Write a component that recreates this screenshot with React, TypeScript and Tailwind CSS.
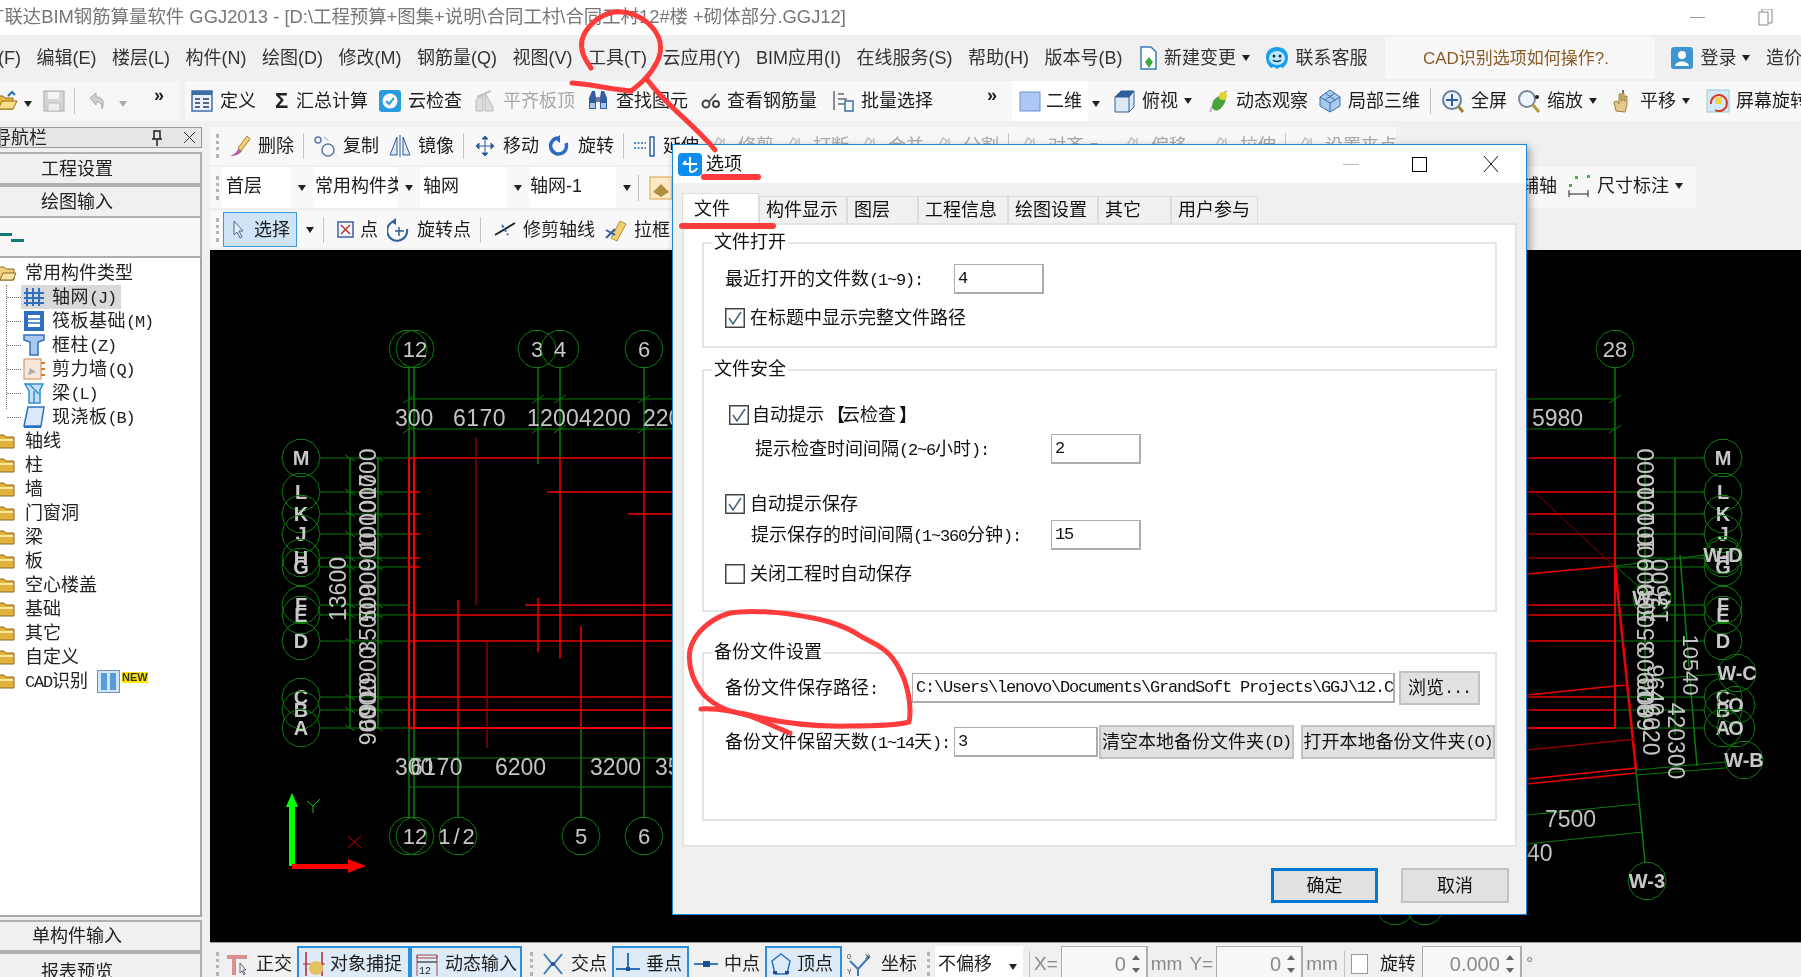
import React from "react";

const Caret = ({ c = "border-t-[#222]" }: { c?: string }) => (
  <span className={`inline-block w-0 h-0 border-x-[4px] border-x-transparent border-t-[6px] shrink-0 ${c}`} />
);
const Grip = () => <div className="w-0 h-[24px] border-l-[3px] border-dotted border-[#b4b4b4] shrink-0" />;
const Sep = () => <div className="w-px h-[26px] bg-[#c4c4c4] shrink-0" />;
const L = ({ children }: { children: React.ReactNode }) => (
  <span className="[font-family:'Liberation_Mono',monospace] text-[17px] tracking-[-1.2px]">{children}</span>
);

const S = ({ children, w = 24 }: { children: React.ReactNode; w?: number }) => (
  <svg width={w} height="24" viewBox={`0 0 ${w} 24`} fill="none" className="shrink-0">{children}</svg>
);

const I = {
  open: <S><path d="M1 7h8l2 2h8v11H1z" fill="#e8b84a" stroke="#9a6a10" /><path d="M4 20l4-8h15l-4 8z" fill="#f9dc86" stroke="#9a6a10" /><path d="M14 7l4-4 3 3" stroke="#2b6cb0" strokeWidth="2" /></S>,
  save: <S><rect x="2" y="2" width="20" height="20" fill="#d6d6d6" stroke="#aaa" /><rect x="6" y="3" width="11" height="7" fill="#f4f4f4" /><rect x="6" y="14" width="12" height="8" fill="#eee" stroke="#bbb" /></S>,
  undo: <S><path d="M5 9l6-5v4c6 0 9 4 6 12 0-6-2-7-6-7v3z" fill="#d0d0d0" stroke="#aaa" /></S>,
  def: <S><rect x="2" y="2" width="20" height="20" fill="#e9f1fb" stroke="#3d6ea8" strokeWidth="1.5" /><rect x="2" y="2" width="20" height="4" fill="#3d6ea8" /><path d="M5 10h5M5 14h5M5 18h5M13 10h6M13 14h6M13 18h6" stroke="#335" strokeWidth="1.5" /></S>,
  cloud: <S><rect x="1" y="1" width="22" height="22" rx="3" fill="#2b9be0" /><circle cx="12" cy="12" r="7.5" fill="#fff" /><path d="M8 12l3 3 5-6" stroke="#2b9be0" strokeWidth="2" /></S>,
  flat: <S><path d="M3 22V11l7-5v16zM12 22V4l8 14v4z" fill="#ddd" stroke="#b8b8b8" /><path d="M4 8L18 2" stroke="#c4c4c4" strokeWidth="2" /></S>,
  find: <S><path d="M3 9l3-7h3l1 7v11H3zM21 9l-3-7h-3l-1 7v11h7z" fill="#2f5f9e" /><rect x="10" y="8" width="4" height="5" fill="#77a" /><rect x="4" y="14" width="5" height="5" fill="#a8c6e8" /><rect x="15" y="14" width="5" height="5" fill="#a8c6e8" /></S>,
  glass: <S w={20}><circle cx="5" cy="15" r="3.5" stroke="#444" strokeWidth="2" /><circle cx="15" cy="15" r="3" stroke="#444" strokeWidth="2" /><path d="M8 13l7-8" stroke="#444" strokeWidth="1.5" /></S>,
  batch: <S><path d="M3 2v19M7 5h6M7 10h9M7 15h6" stroke="#667" strokeWidth="1.5" /><path d="M14 12h8v10h-8z" stroke="#3d6ea8" strokeWidth="1.5" /></S>,
  two: <S><rect x="2" y="3" width="20" height="19" fill="#aec8f4" stroke="#6a90d0" /></S>,
  top: <S><path d="M3 8l6-6h13v16l-5 5H3z" fill="#dbe8f5" stroke="#335e8e" /><path d="M3 8h14v15M17 8l5-6" stroke="#335e8e" /><path d="M9 2h13l-5 6H3z" fill="#2f5f9e" /></S>,
  orbit: <S><path d="M4 23C7 14 12 6 21 2" stroke="#b8b8b8" strokeWidth="2" /><path d="M7 12c3-4 8-6 11-4s1 7-3 11-8 3-9-1z" fill="#49a33c" /><circle cx="17" cy="7" r="4" fill="#e5d430" /></S>,
  local: <S><path d="M12 1l10 7v9l-10 6-10-6V8z" fill="#a9c8ec" stroke="#3d6ea8" /><path d="M2 8l10 6 10-6M12 14v9M7 4l10 7M17 4L7 11" stroke="#3d6ea8" /></S>,
  full: <S><circle cx="11" cy="11" r="9" fill="#e8f0fa" stroke="#667a99" strokeWidth="2" /><path d="M11 5v12M5 11h12" stroke="#2f5f9e" strokeWidth="2" /><path d="M17 17l5 6" stroke="#a08030" strokeWidth="3" /></S>,
  zoom: <S><circle cx="10" cy="10" r="8" fill="#eef4fb" stroke="#7788a0" strokeWidth="2" /><path d="M16 16l6 7" stroke="#b89a40" strokeWidth="3" /><circle cx="20" cy="8" r="2" fill="#222" /></S>,
  hand: <S><path d="M6 22l-2-9 3-1 2 3V5h2v7h1V4h2v8h1V7h2v9l-2 7z" fill="#e3c98a" stroke="#a08040" /><path d="M13 1v3" stroke="#668" strokeWidth="2" /></S>,
  screen: <S><rect x="1" y="1" width="22" height="22" fill="#d3eaf8" stroke="#9cc" /><path d="M5 15a8 8 0 1 1 4 6" stroke="#d83a2a" strokeWidth="2" /><rect x="9" y="8" width="7" height="7" fill="#f1d24a" /></S>,
  del: <S><path d="M2 22c3-1 6-3 9-8l3 3c-2 3-6 5-12 5z" fill="#c060a0" /><path d="M10 14l9-12 3 3-9 12z" fill="#f1d070" stroke="#aa8030" /></S>,
  copy: <S><circle cx="5" cy="6" r="3" stroke="#5a7aa8" strokeWidth="1.5" /><circle cx="15" cy="16" r="6" stroke="#5a7aa8" strokeWidth="1.5" /><path d="M11 3l5 4" stroke="#5a7aa8" strokeDasharray="2 1" /></S>,
  mirror: <S><path d="M2 21L9 3v18zM22 21L15 3v18z" fill="#dbe8f5" stroke="#2f5f9e" /><path d="M12 1v22" stroke="#2f5f9e" /></S>,
  move: <S><path d="M12 2v20M3 12h18M12 2l-3 3h6zM12 22l-3-3h6zM3 12l3-3v6zM21 12l-3-3v6z" stroke="#2f5f9e" fill="#2f5f9e" /></S>,
  rot: <S><path d="M10 4a8 8 0 1 0 8 5" stroke="#2a6ac0" strokeWidth="3.5" /><path d="M12 1v8l-5-4z" fill="#2a6ac0" /></S>,
  ext: <S><path d="M1 9h12M1 14h12" stroke="#2f5f9e" strokeDasharray="2 1.5" strokeWidth="1.5" /><rect x="17" y="3" width="4" height="19" stroke="#2f5f9e" strokeWidth="1.5" /></S>,
  grayT: <S><path d="M2 20L10 4l4 3-8 13zM16 4v16" stroke="#c4c4c4" strokeWidth="1.5" /></S>,
  layer: <S><rect x="1" y="1" width="22" height="22" fill="#fde9c8" stroke="#e0a040" /><path d="M4 16l8-8 8 8-8 5z" fill="#b09040" /></S>,
  arrow: <S w={16}><path d="M4 3v14l3-3 3 6 2-1-3-6h4z" fill="#e8eef6" stroke="#4a6a90" /></S>,
  point: <S w={18}><rect x="2" y="4" width="15" height="15" fill="#f4f8fd" stroke="#3d5fa0" strokeWidth="1.5" /><path d="M5 7l9 9M14 7l-9 9" stroke="#c03030" strokeWidth="1.5" /></S>,
  rotP: <S><path d="M8 3a10 10 0 1 0 12 8" stroke="#2f5f9e" strokeWidth="2" /><path d="M9 0v7l-5-3z" fill="#2f5f9e" /><path d="M12 9v9M8 13h9" stroke="#2f5f9e" strokeWidth="1.5" /></S>,
  trim: <S><path d="M2 17L22 5" stroke="#222" strokeWidth="2" /><path d="M9 7l6 10" stroke="#2a6ac0" strokeWidth="2" strokeDasharray="3 2" /></S>,
  box: <S><path d="M7 20l9-17 6 3-9 17z" fill="#f1d070" stroke="#b09040" /><path d="M2 12l9 5M2 20l9-9" stroke="#2f5f9e" strokeWidth="2" /></S>,
  doc: <S w={20}><path d="M3 1h10l5 5v17H3z" fill="#fff" stroke="#3d7ab8" strokeWidth="1.5" /><path d="M11 11l4 5-4 6-4-6z" fill="#3aa83a" /></S>,
  smile: <S><path d="M12 1c6 0 11 4 11 10s-3 9-5 11l-3-1-3 2-3-2-3 1C4 20 1 17 1 11S6 1 12 1z" fill="#19a0ea" /><ellipse cx="12" cy="12" rx="8" ry="7" fill="#bfe9ff" /><circle cx="9" cy="10" r="1.5" fill="#135" /><circle cx="15" cy="10" r="1.5" fill="#135" /><path d="M8 14c2 2 6 2 8 0" stroke="#135" strokeWidth="1.5" /></S>,
  user: <S><rect x="1" y="1" width="22" height="22" rx="3" fill="#3c96d2" /><circle cx="12" cy="9" r="4" fill="#fff" /><path d="M5 20c1-6 13-6 14 0z" fill="#fff" /></S>,
  size: <S><rect x="8" y="2" width="3" height="3" fill="#30c040" /><rect x="20" y="1" width="3" height="3" fill="#30c040" /><rect x="2" y="10" width="3" height="3" fill="#30c040" /><path d="M2 16v7M21 16v7M2 20h19" stroke="#222" /></S>,
  ortho: <S><path d="M2 5h20M9 5v18" stroke="#d89090" strokeWidth="4" /><path d="M15 11v10l2-2 2 4 1-1-2-4h3z" fill="#eee" stroke="#667" /></S>,
  snap: <S><path d="M4 0v24M20 0v24" stroke="#b02a2a" strokeWidth="1.5" /><path d="M1 12h22" stroke="#b02a2a" /><circle cx="14" cy="16" r="7" fill="#e3c060" /></S>,
  dyn: <S><path d="M2 3h20v3H2zM2 3v21M22 3v21" stroke="#a04a4a" /><path d="M2 10h20" stroke="#555" strokeWidth="1.5" /><text x="4" y="22" fontSize="10" fill="#222" fontFamily="Liberation Mono">12</text></S>,
  cross: <S><path d="M3 2l8 10L3 22M21 2l-8 10 8 10" stroke="#3d7ab8" strokeWidth="2" /><circle cx="12" cy="12" r="2" fill="#1f4e8c" /></S>,
  perp: <S><path d="M12 1v15" stroke="#2f6fc0" strokeWidth="2" /><path d="M0 17h24" stroke="#2f6fc0" strokeWidth="2" /><rect x="10" y="15" width="4" height="4" fill="#1f4e8c" /></S>,
  mid: <S><path d="M0 12h24" stroke="#3d7ab8" strokeWidth="2" /><rect x="9" y="9" width="7" height="6" fill="#1f4e8c" /></S>,
  vert: <S><path d="M12 2l9 7-3 13H6L3 9z" stroke="#2f6fc0" strokeWidth="1.5" /><rect x="4" y="19" width="4" height="3" fill="#1f4e8c" /><rect x="16" y="19" width="4" height="3" fill="#1f4e8c" /></S>,
  coord: <S w={28}><path d="M3 9l8 8 12-13M11 17v7" stroke="#3d7ab8" strokeWidth="2" /><text x="0" y="7" fontSize="7" fill="#333">0</text><text x="18" y="7" fontSize="7" fill="#333">X</text><text x="0" y="22" fontSize="7" fill="#333">Y</text></S>,
};

const Tool = ({ icon, label, gray, caret, className = "" }: { icon?: React.ReactNode; label: string; gray?: boolean; caret?: boolean; className?: string }) => (
  <div className={`flex items-center gap-[6px] shrink-0 ${gray ? "text-[#a8a8a8]" : ""} ${className}`}>
    {icon}
    <span className="whitespace-nowrap">{label}</span>
    {caret && <Caret c={gray ? "border-t-[#aaa]" : "border-t-[#222]"} />}
  </div>
);

const Field = ({ width, children, className = "" }: { width: string; children?: React.ReactNode; className?: string }) => (
  <div className={`${width} h-[30px] bg-white border border-[#adadad] border-b-2 border-r-2 flex items-center pl-[3px] overflow-hidden whitespace-nowrap shrink-0 ${className}`}>
    <L>{children}</L>
  </div>
);

const Check = ({ on }: { on?: boolean }) => (
  <svg width="20" height="20" viewBox="0 0 20 20" className="shrink-0">
    <rect x="0.75" y="0.75" width="18.5" height="18.5" fill="#fff" stroke="#444" strokeWidth="1.5" />
    {on && <path d="M4 10l4 6 8-12" fill="none" stroke="#3f5f80" strokeWidth="1.5" />}
  </svg>
);

const Group = ({ title, className, children }: { title: string; className: string; children: React.ReactNode }) => (
  <div className={`relative border-2 border-[#e4e4e4] ${className}`}>
    <span className="absolute left-[8px] top-[-14px] bg-white px-[2px] leading-[24px] whitespace-nowrap">{title}</span>
    {children}
  </div>
);

const Btn = ({ className, children }: { className: string; children: React.ReactNode }) => (
  <div className={`flex items-center justify-center bg-[#e1e1e1] border-2 border-[#c2c2c2] whitespace-nowrap shrink-0 ${className}`}>{children}</div>
);

const Tab = ({ label, className }: { label: string; className: string }) => (
  <div className={`h-[27px] bg-[#f0f0f0] border border-b-0 border-[#dcdcdc] pl-[6px] flex items-center whitespace-nowrap overflow-hidden ${className}`}>{label}</div>
);

const Dialog = () => (
  <div className="absolute left-[672px] top-[144px] w-[855px] h-[771px] border border-[#1c86d8] bg-[#f0f0f0] shadow-[3px_3px_8px_rgba(0,0,0,0.35)] text-[#111] text-[18px] flex flex-col">
    <div className="h-[38px] bg-white flex items-center pl-[5px]">
      <svg width="24" height="23" viewBox="0 0 24 23"><rect width="24" height="23" rx="4" fill="#0a8cf0" /><path d="M12 4v15M5 11h14M5 11l3-3M12 19c3 0 6-1 7-4" stroke="#fff" strokeWidth="2" fill="none" /></svg>
      <span className="ml-[4px]">选项</span>
      <div className="ml-auto w-[16px] h-px bg-[#b8b8b8] mr-[53px]" />
      <div className="w-[15px] h-[15px] border-[1.5px] border-black mr-[57px]" />
      <svg width="14" height="16" viewBox="0 0 14 16" className="mr-[28px]"><path d="M0 0l14 16M14 0L0 16" stroke="#111" /></svg>
    </div>
    <div className="h-[40px] flex items-end pl-[9px]">
      <div className="h-[30px] w-[77px] bg-white border border-b-0 border-[#dcdcdc] pl-[11px] flex items-center">文件</div>
      <Tab label="构件显示" className="w-[88px]" />
      <Tab label="图层" className="w-[71px]" />
      <Tab label="工程信息" className="w-[90px]" />
      <Tab label="绘图设置" className="w-[90px]" />
      <Tab label="其它" className="w-[73px]" />
      <Tab label="用户参与" className="w-[87px]" />
    </div>
    <div className="mx-[9px] h-[624px] bg-white border-2 border-[#e4e4e4] px-[18px]">
      <Group title="文件打开" className="mt-[17px] h-[106px] pl-[21px] pt-[20px]">
        <div className="flex items-center">
          <span className="w-[229px] whitespace-nowrap">最近打开的文件数<L>(1~9):</L></span>
          <Field width="w-[90px]">4</Field>
        </div>
        <div className="flex items-center gap-[5px] mt-[14px]"><Check on /><span>在标题中显示完整文件路径</span></div>
      </Group>
      <Group title="文件安全" className="mt-[21px] h-[243px] pl-[21px] pt-[34px]">
        <div className="flex items-center gap-[3px] ml-[4px]"><Check on /><span>自动提示</span><span className="font-bold">【</span><span className="-ml-[6px]">云检查</span><span className="font-bold">】</span></div>
        <div className="flex items-center mt-[9px]">
          <span className="w-[326px] pl-[30px] whitespace-nowrap">提示检查时间间隔<L>(2~6</L>小时<L>):</L></span>
          <Field width="w-[90px]">2</Field>
        </div>
        <div className="flex items-center gap-[5px] mt-[30px]"><Check on /><span>自动提示保存</span></div>
        <div className="flex items-center mt-[6px]">
          <span className="w-[326px] pl-[26px] whitespace-nowrap">提示保存的时间间隔<L>(1~360</L>分钟<L>):</L></span>
          <Field width="w-[90px]">15</Field>
        </div>
        <div className="flex items-center gap-[5px] mt-[14px]"><Check /><span>关闭工程时自动保存</span></div>
      </Group>
      <Group title="备份文件设置" className="mt-[40px] h-[169px] pl-[21px] pt-[17px]">
        <div className="flex items-center h-[34px]">
          <span className="w-[187px] whitespace-nowrap">备份文件保存路径<L>:</L></span>
          <Field width="w-[483px]">{"C:\\Users\\lenovo\\Documents\\GrandSoft Projects\\GGJ\\12.C"}</Field>
          <Btn className="ml-[4px] w-[81px] h-[34px]"><span>浏览</span><L>...</L></Btn>
        </div>
        <div className="flex items-center h-[34px] mt-[20px]">
          <span className="w-[229px] whitespace-nowrap">备份文件保留天数<L>(1~14</L>天<L>):</L></span>
          <Field width="w-[144px]" className="border-r-0">3</Field>
          <Btn className="ml-[1px] w-[195px] h-[34px]"><span>清空本地备份文件夹</span><L>(D)</L></Btn>
          <Btn className="ml-[7px] w-[194px] h-[34px]"><span>打开本地备份文件夹</span><L>(O)</L></Btn>
        </div>
      </Group>
    </div>
    <div className="flex justify-end gap-[23px] pr-[17px] mt-[21px]">
      <Btn className="w-[107px] h-[35px] !border-[3px] !border-[#0078d7]">确定</Btn>
      <Btn className="w-[108px] h-[35px]">取消</Btn>
    </div>
  </div>
);

const Folder = ({ open }: { open?: boolean }) => (
  <svg width="20" height="16" viewBox="0 0 20 16" className="shrink-0 ml-[-3px]">
    <path d="M0 2h7l2 2h8v11H0z" fill={open ? "#f0cf7a" : "#e2b23c"} stroke="#8a6a20" />
    {open ? <path d="M3 15l3-7h13l-3 7z" fill="#f9e3a4" stroke="#8a6a20" /> : <path d="M1 6h15v2H1z" fill="#fbe7a8" />}
  </svg>
);

const TreeIcon = ({ k }: { k: number }) => {
  const a = [
    <><path d="M4 3v18M10 3v18M16 3v18M1 8h20M1 13h20M1 18h20" stroke="#2f6fc0" strokeWidth="2" /></>,
    <><rect x="1" y="2" width="20" height="20" fill="#2f6fc0" /><rect x="5" y="6" width="12" height="12" fill="#fff" /><path d="M5 10h12M5 14h12" stroke="#2f6fc0" strokeWidth="1.5" /></>,
    <><path d="M1 2h20v5l-6 2v13H7V9L1 7z" fill="#a8c8f0" stroke="#2f6fc0" strokeWidth="1.5" /></>,
    <><rect x="1" y="2" width="17" height="20" fill="#f6e7dc" stroke="#d08a50" /><path d="M5 18l8-3-6-4z" fill="#aaa" /><path d="M18 6h4M18 12h4M18 18h4" stroke="#e07a20" strokeWidth="2" /></>,
    <><path d="M2 3h18l-3 6v13H6V10z" fill="#c8e0f8" stroke="#2f8fd0" strokeWidth="1.5" /><path d="M6 3l10 10M11 10v12" stroke="#2f8fd0" strokeWidth="1.5" /></>,
    <><path d="M5 2h16l-3 19H1z" fill="#dbe8fa" stroke="#2f6fc0" strokeWidth="1.5" /><path d="M1 21h17v2H1z" fill="#2f6fc0" /></>,
  ];
  return <svg width="22" height="24" viewBox="0 0 22 24" className="shrink-0">{a[k]}</svg>;
};

const kids: [string, string][] = [["轴网", "(J)"], ["筏板基础", "(M)"], ["框柱", "(Z)"], ["剪力墙", "(Q)"], ["梁", "(L)"], ["现浇板", "(B)"]];
const folders = ["轴线", "柱", "墙", "门窗洞", "梁", "板", "空心楼盖", "基础", "其它", "自定义"];

const SideBtn = ({ label, className }: { label: string; className: string }) => (
  <div className={`shrink-0 bg-[#f0f0f0] border-y-2 border-r-2 border-[#b0b0b0] flex items-center justify-center pr-[46px] ${className}`}>{label}</div>
);

const LeftPanel = () => (
  <div className="w-[202px] shrink-0 flex flex-col text-[#222] text-[18px] overflow-hidden">
    <div className="h-[21px] shrink-0 bg-[#e6e6e6] border border-[#9a9a9a] flex items-center overflow-hidden">
      <span className="ml-[-8px] leading-none">导航栏</span>
      <svg width="14" height="16" viewBox="0 0 14 16" className="ml-auto mr-[20px]"><path d="M4 1h6v8H4zM2 9h10M7 9v7" stroke="#222" strokeWidth="1.5" fill="none" /></svg>
      <svg width="11" height="11" viewBox="0 0 11 11" className="mr-[6px]"><path d="M0 0l11 11M11 0L0 11" stroke="#333" /></svg>
    </div>
    <SideBtn label="工程设置" className="mt-[4px] h-[33px]" />
    <SideBtn label="绘图输入" className="h-[33px]" />
    <div className="h-[40px] shrink-0 bg-[#f7f7f7] border-r-2 border-b-2 border-[#b0b0b0]">
      <div className="flex flex-col pt-[15px]">
        <div className="w-[12px] h-[3px] bg-[#127a72]" />
        <div className="w-[13px] h-[3px] bg-[#127a72] ml-[11px] mt-[3px]" />
      </div>
    </div>
    <div className="h-[659px] shrink-0 bg-white border-r-2 border-b-2 border-[#a8a8a8] pt-[3px]">
      <div className="h-[24px] flex items-center gap-[8px]"><Folder open /><span>常用构件类型</span></div>
      <div className="relative">
        <div className="absolute left-[6px] top-0 h-[124px] border-l border-dotted border-[#777]" />
        {kids.map(([t, k], i) => (
          <div key={t} className={`h-[24px] flex items-center ml-[7px]`}>
            <div className="w-[14px] border-t border-dotted border-[#777] shrink-0" />
            <div className={`flex items-center gap-[7px] pl-[2px] pr-[5px] h-[24px] ${i === 0 ? "bg-[#d9d9d9]" : ""}`}>
              <TreeIcon k={i} />
              <span className="whitespace-nowrap tracking-[0.5px]">{t}<L>{k}</L></span>
            </div>
          </div>
        ))}
      </div>
      {folders.map((f) => (
        <div key={f} className="h-[24px] flex items-center gap-[8px]"><Folder /><span>{f}</span></div>
      ))}
      <div className="h-[24px] flex items-center gap-[8px]">
        <Folder />
        <span className="whitespace-nowrap"><L>CAD</L>识别</span>
        <svg width="23" height="23" viewBox="0 0 23 23" className="ml-[1px] shrink-0"><rect x="0.5" y="0.5" width="22" height="22" fill="#cfe6fb" stroke="#7a8ea8" /><rect x="4" y="3" width="6" height="17" fill="#5a9be0" /><rect x="13" y="3" width="6" height="17" fill="#5a9be0" /></svg>
        <span className="-ml-[6px] mb-[8px] bg-[#ffe600] text-[11px] leading-[11px] font-bold [font-family:'Liberation_Sans',sans-serif] text-[#333]">NEW</span>
      </div>
    </div>
    <SideBtn label="单构件输入" className="mt-[3px] h-[32px]" />
    <SideBtn label="报表预览" className="h-[40px]" />
  </div>
);

const Bubble = ({ x, y, t, r = 19, size = 22, bold, ls = 0 }: { x: number; y: number; t?: string; r?: number; size?: number; bold?: boolean; ls?: number }) => {
  const pts = Array.from({ length: 14 }, (_, i) => {
    const a = (i / 14) * Math.PI * 2;
    return `${(x + r * Math.cos(a)).toFixed(1)},${(y + r * Math.sin(a)).toFixed(1)}`;
  }).join(" ");
  return (
    <g>
      <polygon points={pts} fill="none" stroke="#0a7d0a" strokeWidth="1" />
      {t && <text x={x} y={y + size * 0.36} textAnchor="middle" letterSpacing={ls} fontSize={size} fontWeight={bold ? 700 : 400} fill="#c8c8c8" fontFamily="Liberation Sans">{t}</text>}
    </g>
  );
};

const rows = [458, 492, 514, 534, 558, 567, 605, 615, 641, 697, 710, 728];
const rowNames = ["M", "L", "K", "J", "H", "G", "F", "E", "D", "C", "B", "A"];
const dim = "#c4c4c4";
const Dim = ({ x, y, t, rot, size = 23, ls = 0 }: { x: number; y: number; t: string; rot?: number; size?: number; ls?: number }) => (
  <text x={x} y={y} fontSize={size} letterSpacing={ls} fill={dim} fontFamily="Liberation Sans" transform={rot ? `rotate(${rot} ${x} ${y})` : undefined} textAnchor={rot ? "middle" : "start"}>{t}</text>
);

const Canvas = () => {
  const G = "#0a7d0a", R = "#f00000", D = "#8b0000";
  const leftStack: [number, string][] = [[474, "1700"], [500, "1000"], [526, "1000"], [552, "900"], [578, "900"], [603, "500"], [628, "3500"], [672, "2900"], [697, "900"], [712, "600"], [726, "900"]];
  const rightStack: [number, string][] = [[474, "1000"], [500, "1000"], [526, "1000"], [552, "900"], [578, "900"], [603, "500"], [628, "3500"], [672, "2900"], [697, "900"], [712, "600"]];
  return (
    <svg width="1591" height="692" viewBox="210 250 1591 692" className="block">
      <rect x="210" y="250" width="1591" height="692" fill="#000" />
      {[409, 414, 644, 1615].map((x) => <line key={x} x1={x} y1="368" x2={x} y2="458" stroke={G} strokeWidth="1.5" />)}
      <line x1="538" y1="368" x2="538" y2="464" stroke={G} strokeWidth="1.5" />
      <line x1="560" y1="368" x2="560" y2="458" stroke={G} strokeWidth="1.5" />
      {[399, 429].map((y) => <line key={y} x1="409" y1={y} x2="1615" y2={y} stroke={G} />)}
      {[409, 538, 560, 644, 1615].map((x) => <g key={x}><path d={`M${x - 6} ${403} L${x + 6} ${395}`} stroke={G} /><path d={`M${x - 6} ${433} L${x + 6} ${425}`} stroke={G} /></g>)}
      {rows.map((y) => <line key={y} x1="320" y1={y} x2="409" y2={y} stroke={G} />)}
      {[350, 378].map((x) => <line key={x} x1={x} y1="458" x2={x} y2="728" stroke={G} strokeWidth="1.5" />)}
      {rows.map((y) => <g key={y}><path d={`M345 ${y - 3} L355 ${y + 3}`} stroke={G} /><path d={`M373 ${y - 3} L383 ${y + 3}`} stroke={G} /></g>)}
      {[409, 414, 458, 581, 644].map((x) => <line key={x} x1={x} y1="728" x2={x} y2="817" stroke={G} strokeWidth="1.5" />)}
      {[758, 787].map((y) => <line key={y} x1="409" y1={y} x2="680" y2={y} stroke={G} />)}
      {[409, 414].map((x) => <line key={x} x1={x} y1="458" x2={x} y2="728" stroke={R} strokeWidth="2" />)}
      <line x1="409" y1="458" x2="1615" y2="458" stroke={R} strokeWidth="1.5" />
      {[615, 641, 697, 710].map((y) => <line key={y} x1="409" y1={y} x2="1615" y2={y} stroke={R} strokeWidth="1.5" />)}
      <line x1="409" y1="728" x2="1615" y2="728" stroke={R} strokeWidth="2" />
      {[492, 514, 534, 558, 567].map((y) => <line key={y} x1="409" y1={y} x2="420" y2={y} stroke={R} strokeWidth="1.5" />)}
      <line x1="476" y1="438" x2="476" y2="605" stroke={D} strokeWidth="1.5" />
      <line x1="458" y1="600" x2="458" y2="728" stroke={R} strokeWidth="1.5" />
      <line x1="487" y1="641" x2="487" y2="748" stroke={D} strokeWidth="1.5" />
      <line x1="538" y1="598" x2="538" y2="652" stroke={R} strokeWidth="1.5" />
      <line x1="560" y1="458" x2="560" y2="658" stroke={R} strokeWidth="1.5" />
      <line x1="581" y1="626" x2="581" y2="728" stroke={R} strokeWidth="1.5" />
      <line x1="644" y1="458" x2="644" y2="728" stroke={R} strokeWidth="1.5" />
      <line x1="547" y1="492" x2="1615" y2="492" stroke={R} strokeWidth="1.5" />
      <line x1="628" y1="514" x2="1615" y2="514" stroke={R} strokeWidth="1.5" />
      <line x1="1527" y1="534" x2="1615" y2="534" stroke={R} />
      <line x1="1527" y1="558" x2="1615" y2="558" stroke={R} />
      <line x1="525" y1="605" x2="1615" y2="605" stroke={R} strokeWidth="1.5" />
      <line x1="1615" y1="458" x2="1615" y2="728" stroke={R} strokeWidth="2" />
      <line x1="1527" y1="485" x2="1615" y2="567" stroke={D} />
      <line x1="1615" y1="566" x2="1636" y2="770" stroke={R} strokeWidth="2.5" />
      <line x1="1527" y1="574" x2="1615" y2="566" stroke={R} strokeWidth="1.5" />
      <line x1="1527" y1="695" x2="1625" y2="685" stroke={R} strokeWidth="1.5" />
      <line x1="1527" y1="750" x2="1636" y2="739" stroke={D} strokeWidth="1.5" />
      <line x1="1527" y1="779" x2="1636" y2="768" stroke={R} strokeWidth="1.5" />
      <line x1="1527" y1="784" x2="1636" y2="773" stroke={R} strokeWidth="1.5" />
      <line x1="1636" y1="770" x2="1645" y2="862" stroke={G} strokeWidth="1.5" />
      {rows.map((y) => <line key={y} x1="1615" y1={y} x2="1705" y2={y} stroke={G} />)}
      <line x1="1615" y1="566" x2="1652" y2="598" stroke={G} />
      <line x1="1615" y1="566" x2="1705" y2="555" stroke={G} />
      {[1645, 1675].map((x) => <line key={x} x1={x} y1="458" x2={x} y2="735" stroke={G} strokeWidth="1.5" />)}
      <line x1="1680" y1="555" x2="1697" y2="766" stroke={G} strokeWidth="1.5" />
      <line x1="1636" y1="770" x2="1725" y2="762" stroke={G} />
      <line x1="1636" y1="775" x2="1725" y2="768" stroke={G} />
      <line x1="1640" y1="680" x2="1718" y2="674" stroke={G} />
      <line x1="1527" y1="815" x2="1638" y2="804" stroke={G} />
      <line x1="1527" y1="844" x2="1643" y2="832" stroke={G} />
      <Bubble x={408} y={349} /><Bubble x={415} y={349} t="12" />
      <Bubble x={537} y={349} t="3" /><Bubble x={560} y={349} t="4" /><Bubble x={644} y={349} t="6" /><Bubble x={1615} y={349} t="28" />
      <Bubble x={408} y={836} /><Bubble x={415} y={836} t="12" /><Bubble x={458} y={836} t="1/2" ls={3} /><Bubble x={581} y={836} t="5" /><Bubble x={644} y={836} t="6" />
      {rows.map((y, i) => <Bubble key={y} x={301} y={y} t={rowNames[i]} size={20} bold />)}
      {rows.map((y, i) => <Bubble key={y} x={1723} y={y} t={rowNames[i]} size={20} bold />)}
      <Bubble x={1723} y={555} t="W-D" size={20} bold />
      <Bubble x={1652} y={598} t="W-C" size={20} bold />
      <Bubble x={1737} y={673} t="W-C" size={20} bold />
      <Bubble x={1736} y={705} t="O" size={20} bold />
      <Bubble x={1736} y={728} t="O" size={20} bold />
      <Bubble x={1744} y={760} t="W-B" size={20} bold />
      <Bubble x={1647} y={881} t="W-3" size={20} bold />
      <Bubble x={1395} y={906} /><Bubble x={1425} y={906} />
      <Dim x={395} y={426} t="300" />
      <Dim x={453} y={426} t="6170" ls={0.5} />
      <Dim x={527} y={426} t="12004200" ls={0.2} />
      <Dim x={643} y={426} t="2200" />
      <Dim x={1532} y={426} t="5980" />
      <Dim x={395} y={775} t="300" />
      <Dim x={410} y={775} t="6170" ls={0.5} />
      <Dim x={495} y={775} t="6200" />
      <Dim x={590} y={775} t="3200" />
      <Dim x={655} y={775} t="3500" />
      <Dim x={346} y={589} t="13600" rot={-90} />
      {leftStack.map(([y, t], i) => <Dim key={i} x={376} y={y} t={t} rot={-90} />)}
      {rightStack.map(([y, t], i) => <Dim key={i} x={1654} y={y} t={t} rot={-90} />)}
      <Dim x={1668} y={591} t="13600" rot={-90} />
      <Dim x={1683} y={665} t="10540" rot={90} size={22} />
      <Dim x={1668} y={741} t="420300" rot={90} />
      <Dim x={1647} y={690} t="9640" rot={90} />
      <Dim x={1643} y={730} t="6020" rot={90} />
      <Dim x={1545} y={827} t="7500" size={23} />
      <Dim x={1527} y={861} t="40" />
      <rect x="289" y="805" width="6" height="61" fill="#00ff00" />
      <path d="M292 793l6 14h-12z" fill="#00ff00" />
      <rect x="292" y="864" width="58" height="5" fill="#ff0000" />
      <path d="M366 866l-18-7v14z" fill="#ff0000" />
      <path d="M307 801l6 5 7-7M313 806v7" stroke="#00c800" fill="none" />
      <path d="M348 836l13 12M361 836l-13 12" stroke="#c80000" />
    </svg>
  );
};

const Spin = ({ w, v }: { w: string; v: string }) => (
  <div className={`${w} h-[35px] border border-[#adadad] border-r-2 flex items-center justify-end pr-[6px] gap-[6px] bg-[#f7f7f7] shrink-0`}>
    <span className="text-[#8a8a8a] text-[20px]">{v}</span>
    <div className="flex flex-col gap-[8px] items-center">
      <span className="w-0 h-0 border-x-[4px] border-x-transparent border-b-[5px] border-b-[#666]" />
      <span className="w-0 h-0 border-x-[4px] border-x-transparent border-t-[5px] border-t-[#666]" />
    </div>
  </div>
);

const Pressed = ({ className, children }: { className: string; children: React.ReactNode }) => (
  <div className={`h-[35px] bg-[#dcebf7] border-2 border-[#2a8fdf] flex items-center shrink-0 ${className}`}>{children}</div>
);

export default function App() {
  return (
    <div className="relative w-[1801px] h-[977px] overflow-hidden bg-[#f0f0f0] flex flex-col text-[#1d1d1d] text-[18px] leading-none blur-[0.4px] [font-family:'Liberation_Sans','Noto_Sans_CJK_SC',sans-serif]">
      <div className="h-[35px] shrink-0 bg-white flex items-center text-[18.4px] text-[#777]">
        <span className="-ml-[14px] whitespace-nowrap">广联达BIM钢筋算量软件 GGJ2013 - [D:\工程预算+图集+说明\合同工村\合同工村12#楼 +砌体部分.GGJ12]</span>
        <div className="ml-auto w-[15px] h-px bg-[#999] mr-[53px]" />
        <svg width="16" height="17" viewBox="0 0 16 17" className="mr-[27px]"><path d="M4 3V0h10v14h-4M1 3h9v13H1z" stroke="#888" fill="#fff" /></svg>
      </div>
      <div className="h-[46px] shrink-0 flex items-center gap-[15.5px] -ml-[38px] text-[#333] text-[18px] whitespace-nowrap overflow-hidden">
        <span>文件(F)</span><span>编辑(E)</span><span>楼层(L)</span><span>构件(N)</span><span>绘图(D)</span><span>修改(M)</span><span>钢筋量(Q)</span><span>视图(V)</span><span>工具(T)</span><span>云应用(Y)</span><span>BIM应用(I)</span><span>在线服务(S)</span><span>帮助(H)</span><span>版本号(B)</span>
        <Tool icon={I.doc} label="新建变更" caret />
        <Tool icon={I.smile} label="联系客服" />
        <div className="w-[270px] h-[42px] bg-[#f8f8f8] ml-[2px] shrink-0 flex items-center pl-[38px] text-[#8a5a25] text-[17px] rounded-t-[3px]">CAD识别选项如何操作?.</div>
        <Tool icon={I.user} label="登录" caret />
        <span>造价</span>
      </div>
      <div className="h-[40px] shrink-0 flex items-center">
        <div className="w-[180px] h-full bg-[#f6f6f6] flex items-center shrink-0 text-[#222]">
          <div className="-ml-[6px]">{I.open}</div>
          <div className="ml-[6px]"><Caret /></div>
          <div className="ml-[10px]">{I.save}</div>
          <div className="ml-[8px]"><Sep /></div>
          <div className="ml-[10px]">{I.undo}</div>
          <div className="ml-[10px]"><Caret c="border-t-[#aaa]" /></div>
          <span className="ml-[27px] mb-[12px] font-bold text-[18px]">»</span>
        </div>
        <div className="w-[827px] ml-[5px] h-full bg-[#f8f8f8] flex items-center gap-[14px] pl-[5px] shrink-0">
          <Tool icon={I.def} label="定义" />
          <Tool icon={<span className="font-bold text-[22px] w-[15px] text-[#222]">Σ</span>} label="汇总计算" className="ml-[5px]" />
          <Tool icon={I.cloud} label="云检查" className="-ml-[4px]" />
          <Tool icon={I.flat} label="平齐板顶" gray className="-ml-[3px]" />
          <Tool icon={I.find} label="查找图元" className="-ml-[3px]" />
          <Tool icon={I.glass} label="查看钢筋量" className="-ml-[1px]" />
          <Tool icon={I.batch} label="批量选择" />
          <span className="ml-[40px] mb-[12px] font-bold">»</span>
        </div>
        <div className="flex-1 h-full bg-[#f8f8f8] flex items-center gap-[10px] overflow-hidden whitespace-nowrap">
          <div className="h-full w-[76px] bg-white flex items-center gap-[4px] pl-[6px] shrink-0">{I.two}<span>二维</span></div>
          <div className="-ml-[6px]"><Caret /></div>
          <Tool icon={I.top} label="俯视" caret className="ml-[2px]" />
          <Tool icon={I.orbit} label="动态观察" className="ml-[4px]" />
          <Tool icon={I.local} label="局部三维" />
          <Sep />
          <Tool icon={I.full} label="全屏" />
          <Tool icon={I.zoom} label="缩放" caret />
          <Tool icon={I.hand} label="平移" caret className="ml-[3px]" />
          <Tool icon={I.screen} label="屏幕旋转" className="ml-[6px]" />
        </div>
      </div>
      <div className="flex flex-1 min-h-0 mt-[6px]">
        <LeftPanel />
        <div className="flex-1 min-w-0 flex flex-col pl-[8px]">
          <div className="h-[38px] w-[1186px] shrink-0 bg-[#f8f8f8] flex items-center gap-[9px] pl-[6px] overflow-hidden">
            <Grip />
            <Tool icon={I.del} label="删除" />
            <Sep />
            <Tool icon={I.copy} label="复制" />
            <Tool icon={I.mirror} label="镜像" />
            <Sep />
            <Tool icon={I.move} label="移动" />
            <Tool icon={I.rot} label="旋转" />
            <Sep />
            <Tool icon={I.ext} label="延伸" />
            <Tool icon={I.grayT} label="修剪" gray />
            <Tool icon={I.grayT} label="打断" gray />
            <Tool icon={I.grayT} label="合并" gray />
            <Tool icon={I.grayT} label="分割" gray />
            <Sep />
            <Tool icon={I.grayT} label="对齐" gray caret />
            <Tool icon={I.grayT} label="偏移" gray className="ml-[14px]" />
            <Tool icon={I.grayT} label="拉伸" gray className="ml-[14px]" />
            <Sep />
            <Tool icon={I.grayT} label="设置夹点" gray />
          </div>
          <div className="h-[41px] w-[1486px] mt-[2px] shrink-0 bg-[#f8f8f8] flex items-center pl-[6px] gap-[7px] overflow-hidden whitespace-nowrap">
            <Grip />
            <div className="h-full w-[69px] bg-white flex items-center pl-[4px] pb-[3px] shrink-0 ml-[-4px]">首层</div>
            <div className="w-[8px] flex justify-center"><Caret /></div>
            <div className="h-full w-[85px] bg-white flex items-center pl-[2px] pb-[3px] shrink-0 overflow-hidden">常用构件类型</div>
            <Caret />
            <div className="h-full w-[87px] bg-white flex items-center pl-[3px] pb-[3px] shrink-0">轴网</div>
            <Caret />
            <div className="h-full w-[87px] bg-white flex items-center pl-[1px] pb-[3px] shrink-0">轴网-1</div>
            <Caret />
            <Sep />
            <div className="ml-[3px]">{I.layer}</div>
            <div className="ml-auto flex items-center gap-[10px] pr-[13px] pb-[3px]">
              <span>辅轴</span>
              <Tool icon={I.size} label="尺寸标注" caret />
            </div>
          </div>
          <div className="h-[37px] mt-[3px] shrink-0 flex items-center overflow-hidden whitespace-nowrap">
            <div className="w-[620px] h-full bg-[#f8f8f8] flex items-center gap-[9px] pl-[6px] shrink-0">
              <Grip />
              <div className="w-[74px] h-[35px] bg-[#cfe4f5] border border-[#3a9ae0] flex items-center gap-[8px] pl-[6px] shrink-0 ml-[-5px]">{I.arrow}<span>选择</span></div>
              <Caret />
              <Sep />
              <Tool icon={I.point} label="点" className="ml-[3px]" />
              <Tool icon={I.rotP} label="旋转点" />
              <Sep />
              <Tool icon={I.trim} label="修剪轴线" className="ml-[3px]" />
              <Tool icon={I.box} label="拉框" />
            </div>
          </div>
          <div className="mt-[2px] shrink-0">
            <Canvas />
          </div>
          <div className="h-[35px] shrink-0 whitespace-nowrap overflow-hidden border-t border-[#a0a0a0]">
            <div className="h-[35px] mt-[3px] w-[1330px] flex items-center pl-[6px] shrink-0">
              <Grip />
              <div className="ml-[6px]">{I.ortho}</div>
              <span className="ml-[7px]">正交</span>
              <Pressed className="ml-[5px] w-[113px] pl-[3px] gap-[4px]">{I.snap}<span>对象捕捉</span></Pressed>
              <Pressed className="w-[112px] pl-[3px] gap-[6px]">{I.dyn}<span>动态输入</span></Pressed>
              <div className="ml-[8px]"><Grip /></div>
              <div className="ml-[8px]">{I.cross}</div>
              <span className="ml-[6px]">交点</span>
              <Pressed className="ml-[5px] w-[77px] pl-[2px] gap-[6px]">{I.perp}<span>垂点</span></Pressed>
              <div className="ml-[5px]">{I.mid}</div>
              <span className="ml-[6px]">中点</span>
              <Pressed className="ml-[5px] w-[77px] pl-[2px] gap-[4px]">{I.vert}<span>顶点</span></Pressed>
              <div className="ml-[5px]">{I.coord}</div>
              <span className="ml-[6px]">坐标</span>
              <div className="ml-[10px]"><Grip /></div>
              <div className="h-full w-[88px] bg-white flex items-center pl-[3px] ml-[5px] shrink-0"><span>不偏移</span><span className="ml-auto mr-[6px]"><Caret /></span></div>
              <div className="ml-[6px]"><Sep /></div>
              <span className="ml-[4px] text-[#8a8a8a] text-[19px]">X=</span>
              <div className="ml-[3px]"><Spin w="w-[87px]" v="0" /></div>
              <span className="ml-[3px] text-[#8a8a8a] text-[19px]">mm</span>
              <span className="ml-[7px] text-[#8a8a8a] text-[19px]">Y=</span>
              <div className="ml-[3px]"><Spin w="w-[87px]" v="0" /></div>
              <span className="ml-[3px] text-[#8a8a8a] text-[19px]">mm</span>
              <div className="ml-[6px]"><Sep /></div>
              <div className="ml-[6px] w-[17px] h-[20px] border border-[#999] bg-white shrink-0" />
              <span className="ml-[12px]">旋转</span>
              <div className="ml-[6px]"><Spin w="w-[100px]" v="0.000" /></div>
              <span className="ml-[4px] text-[#8a8a8a]">°</span>
            </div>
          </div>
        </div>
      </div>
      <Dialog />
      <svg width="1801" height="977" viewBox="0 0 1801 977" fill="none" className="absolute inset-0 pointer-events-none">
        <g stroke="#ff3b3b" strokeWidth="5" strokeLinecap="round" strokeLinejoin="round">
          <path d="M591 68C584 58 580 50 582 40C585 28 598 15 614 12C628 10 642 17 650 25C660 35 664 48 657 62C650 76 640 84 631 91" />
          <path d="M572 83C590 84 615 90 631 91" />
          <path d="M646 78C665 105 695 125 715 150" />
          <path d="M704 177H758" strokeWidth="6" />
          <path d="M682 226H773" strokeWidth="6" />
          <path d="M730 613C712 618 694 632 690 650C687 668 695 685 705 696C718 708 730 712 745 714C775 722 810 727 850 726C875 726 898 725 909 722C912 708 908 685 900 670C890 650 878 645 862 637C840 622 815 618 796 615C775 612 750 610 730 613Z" />
          <path d="M701 709C720 708 735 712 750 716C765 722 778 728 790 733" />
        </g>
      </svg>
    </div>
  );
}
